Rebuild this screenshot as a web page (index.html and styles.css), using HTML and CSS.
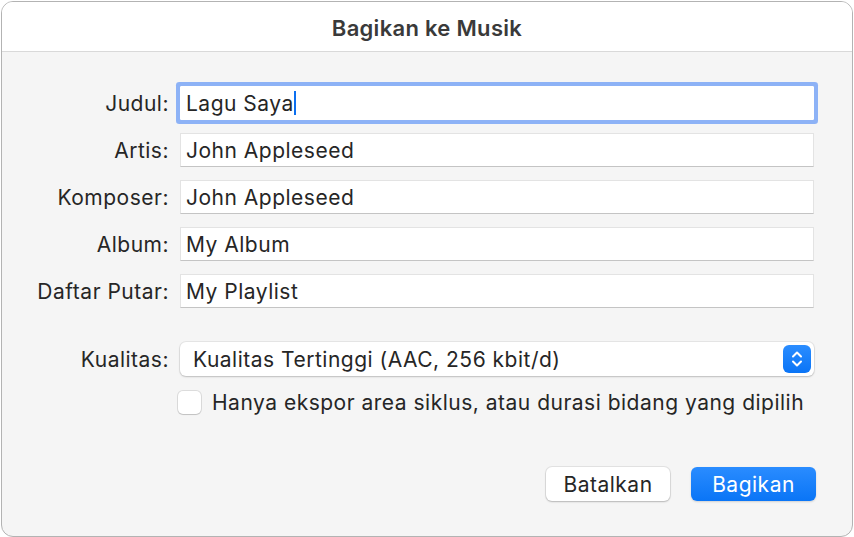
FILE: index.html
```html
<!DOCTYPE html>
<html lang="id">
<head>
<meta charset="utf-8">
<title>Bagikan ke Musik</title>
<link rel="stylesheet" href="styles.css">
</head>
<body>
<div class="window">
  <div class="titlebar">Bagikan ke Musik</div>
  <div class="content">
    <div class="form">
      <label class="label">Judul:</label>
      <div class="field focused">Lagu Saya<span class="caret"></span></div>
      <label class="label">Artis:</label>
      <div class="field">John Appleseed</div>
      <label class="label">Komposer:</label>
      <div class="field">John Appleseed</div>
      <label class="label">Album:</label>
      <div class="field">My Album</div>
      <label class="label">Daftar Putar:</label>
      <div class="field">My Playlist</div>
    </div>
    <div class="form quality">
      <label class="label">Kualitas:</label>
      <div class="popup">
        <span class="popup-text">Kualitas Tertinggi (AAC, 256 kbit/d)</span>
        <span class="stepper">
          <svg width="14" height="20" viewBox="0 0 14 20"><path d="M3 7.5 L7 3.5 L11 7.5 M3 12.5 L7 16.5 L11 12.5" fill="none" stroke="#fff" stroke-width="2" stroke-linecap="round" stroke-linejoin="round"/></svg>
        </span>
      </div>
      <span></span>
      <div class="check-row">
        <span class="checkbox"></span>
        <span class="check-text">Hanya ekspor area siklus, atau durasi bidang yang dipilih</span>
      </div>
    </div>
    <div class="buttons">
      <button class="btn">Batalkan</button>
      <button class="btn primary">Bagikan</button>
    </div>
  </div>
</div>
</body>
</html>
```

FILE: styles.css
```css
* { box-sizing: border-box; }
html, body { margin: 0; padding: 0; background: #ffffff; }
body {
  font-family: Inter, "Noto Sans", "Liberation Sans", sans-serif;
  color: #262626;
  font-size: 21px;
  letter-spacing: 0.5px;
}
.window {
  margin: 1px 0 0 1px;
  width: 852px;
  height: 536px;
  border: 1px solid #b3b3b3;
  border-radius: 12px;
  overflow: hidden;
  background: #f5f5f5;
  display: flex;
  flex-direction: column;
}
.titlebar {
  height: 50px;
  flex: none;
  background: #ffffff;
  border-bottom: 1px solid #d9d9d9;
  display: flex;
  align-items: center;
  justify-content: center;
  font-weight: 600;
  font-size: 22px;
  letter-spacing: 0.3px;
  color: #3a3a3a;
  padding-top: 2px;
}
.content {
  flex: 1;
  display: flex;
  flex-direction: column;
  padding-top: 34px;
}
.form {
  display: grid;
  grid-template-columns: 167px 634px;
  column-gap: 11px;
  row-gap: 13px;
  align-items: center;
}
.label {
  text-align: right;
  white-space: nowrap;
}
.field {
  height: 34px;
  background: #ffffff;
  border: 1px solid #e3e3e3;
  border-bottom-color: #c4c4c4;
  padding: 0 5px;
  display: flex;
  align-items: center;
  white-space: nowrap;
}
.field.focused {
  border-color: #ffffff;
  box-shadow: 0 0 0 4px #8db2f6;
  border-radius: 1px;
}
.caret {
  display: inline-block;
  width: 2px;
  height: 24px;
  background: #0b6ff0;
  margin-left: 0;
}
.quality {
  margin-top: 34px;
  row-gap: 14px;
}
.popup {
  height: 34px;
  background: #ffffff;
  border-radius: 6px;
  box-shadow: 0 0 0 1px rgba(0,0,0,0.06), 0 1px 2px rgba(0,0,0,0.18);
  display: flex;
  align-items: center;
  justify-content: space-between;
  padding: 0 3px 0 13px;
  white-space: nowrap;
}
.stepper {
  width: 28px;
  height: 28px;
  border-radius: 6px;
  background: linear-gradient(#2b8dff, #0a74f6);
  display: flex;
  align-items: center;
  justify-content: center;
}
.check-row {
  display: flex;
  align-items: center;
  gap: 11px;
  margin-left: -2px;
}
.checkbox {
  width: 23px;
  height: 23px;
  border-radius: 5px;
  background: #ffffff;
  box-shadow: 0 0 0 1px rgba(0,0,0,0.10), 0 1px 1px rgba(0,0,0,0.12);
  flex: none;
}
.check-text { white-space: nowrap; }
.buttons {
  margin-top: 52px;
  display: flex;
  justify-content: flex-end;
  gap: 21px;
  padding-right: 36px;
}
.btn {
  font-family: inherit;
  font-size: 21px;
  letter-spacing: 0.5px;
  height: 34px;
  padding: 0;
  width: 124px;
  border: none;
  border-radius: 6px;
  background: #ffffff;
  color: #262626;
  box-shadow: 0 0 0 1px rgba(0,0,0,0.07), 0 1px 2px rgba(0,0,0,0.2);
}
.btn.primary {
  width: 125px;
  color: #ffffff;
  background: linear-gradient(#2a8cff, #0a75f6);
  box-shadow: 0 1px 2px rgba(0,0,0,0.15);
}
```
